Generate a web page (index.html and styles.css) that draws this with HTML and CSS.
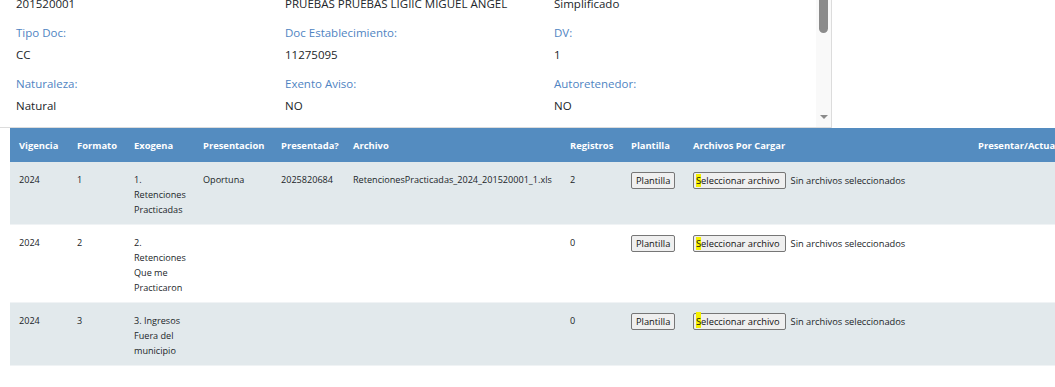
FILE: index.html
```html
<!DOCTYPE html>
<html lang="es">
<head>
  <meta charset="utf-8">
  <title>Exogena</title>
  <link rel="stylesheet" href="styles.css">
</head>
<body>
  <div class="info">
    <div class="info-body">
      <div class="info-grid">
        <div class="field"><div class="label">Código:</div><div class="value">201520001</div></div>
        <div class="field"><div class="label">Nombre:</div><div class="value">PRUEBAS PRUEBAS LIGIIC MIGUEL ANGEL</div></div>
        <div class="field"><div class="label">Régimen:</div><div class="value">Simplificado</div></div>
        <div class="field"><div class="label">Tipo Doc:</div><div class="value">CC</div></div>
        <div class="field"><div class="label">Doc Establecimiento:</div><div class="value">11275095</div></div>
        <div class="field"><div class="label">DV:</div><div class="value">1</div></div>
        <div class="field"><div class="label">Naturaleza:</div><div class="value">Natural</div></div>
        <div class="field"><div class="label">Exento Aviso:</div><div class="value">NO</div></div>
        <div class="field"><div class="label">Autoretenedor:</div><div class="value">NO</div></div>
      </div>
    </div>
    <div class="scrollbar">
      <span class="thumb"></span>
      <span class="arrow"></span>
    </div>
  </div>

  <table class="exo">
    <colgroup>
      <col style="width:58px"><col style="width:57px"><col style="width:69px"><col style="width:78px">
      <col style="width:72px"><col style="width:217px"><col style="width:61px"><col style="width:62px">
      <col style="width:285px"><col style="width:130px">
    </colgroup>
    <thead>
      <tr>
        <th>Vigencia</th><th>Formato</th><th>Exogena</th><th>Presentacion</th><th>Presentada?</th>
        <th>Archivo</th><th>Registros</th><th>Plantilla</th><th>Archivos Por Cargar</th><th>Presentar/Actualizar</th>
      </tr>
    </thead>
    <tbody>
      <tr>
        <td>2024</td><td>1</td><td>1. Retenciones Practicadas</td><td>Oportuna</td><td>2025820684</td>
        <td>RetencionesPracticadas_2024_201520001_1.xls</td><td>2</td>
        <td><button class="btn">Plantilla</button></td>
        <td><span class="file"><button class="btn"><mark>S</mark>eleccionar archivo</button><span class="file-name">Sin archivos seleccionados</span></span></td>
        <td></td>
      </tr>
      <tr class="odd">
        <td>2024</td><td>2</td><td>2. Retenciones Que me Practicaron</td><td></td><td></td>
        <td></td><td>0</td>
        <td><button class="btn">Plantilla</button></td>
        <td><span class="file"><button class="btn"><mark>S</mark>eleccionar archivo</button><span class="file-name">Sin archivos seleccionados</span></span></td>
        <td></td>
      </tr>
      <tr>
        <td>2024</td><td>3</td><td>3. Ingresos Fuera del municipio</td><td></td><td></td>
        <td></td><td>0</td>
        <td><button class="btn">Plantilla</button></td>
        <td><span class="file"><button class="btn"><mark class="late">S</mark>eleccionar archivo</button><span class="file-name">Sin archivos seleccionados</span></span></td>
        <td></td>
      </tr>
    </tbody>
  </table>
</body>
</html>
```

FILE: styles.css
```css
html, body {
  margin: 0;
  padding: 0;
  overflow: hidden;
}
body {
  font-family: "Open Sans", "Noto Sans", sans-serif;
  color: #212529;
  background: #fff;
}

/* panel de datos del contribuyente */
.info {
  display: flex;
  width: 831px;
  height: 127px;
  border-right: 1px solid #dcdcdc;
  border-bottom: 1px solid #dcdcdc;
  overflow: hidden;
}
.info-body {
  flex: 1;
  overflow: hidden;
}
.info-grid {
  display: grid;
  grid-template-columns: 269px 269px 269px;
  padding-left: 16px;
  margin-top: -29px;
}
.field {
  margin-bottom: 7px;
}
.label,
.value {
  font-size: 11.5px;
  line-height: 22px;
  white-space: nowrap;
}
.label {
  color: #4f84c2;
}
.scrollbar {
  position: relative;
  width: 15px;
  background: #f9f9f9;
}
.thumb {
  position: absolute;
  left: 3px;
  top: -10px;
  width: 9px;
  height: 43px;
  border-radius: 0 0 5px 5px;
  background: #8b8b8b;
}
.arrow {
  position: absolute;
  left: 4px;
  top: 115px;
  width: 0;
  height: 0;
  border-left: 4px solid transparent;
  border-right: 4px solid transparent;
  border-top: 4px solid #8b8b8b;
}

/* tabla de formatos */
.exo {
  margin-left: 10px;
  border-collapse: collapse;
  table-layout: fixed;
  width: 1089px;
  font-size: 9.1px;
}
.exo th {
  background: #548cc0;
  color: #fff;
  font-size: 9.4px;
  font-weight: 700;
  text-align: left;
  padding: 0 9px;
  height: 34px;
  white-space: nowrap;
}
.exo td {
  vertical-align: top;
  padding: 10px 9px 7px;
  line-height: 15px;
  background: #e2e9ec;
  border-bottom: 1px solid #f0f3f5;
  white-space: normal;
}
.exo tr.odd td {
  background: #fff;
}
.btn {
  font: inherit;
  font-size: 9.3px;
  line-height: 13px;
  padding: 1px 4px;
  color: #111;
  background: #efefef;
  border: 1px solid #767676;
  border-radius: 2px;
}
.file {
  display: flex;
  align-items: center;
  gap: 5px;
  white-space: nowrap;
}
.file .btn {
  padding: 1px 5px 1px 2px;
}
.file-name {
  font-size: 9.3px;
}
mark {
  background: #f5f000;
  color: inherit;
}
mark.late {
  padding-top: 3px;
}
```
